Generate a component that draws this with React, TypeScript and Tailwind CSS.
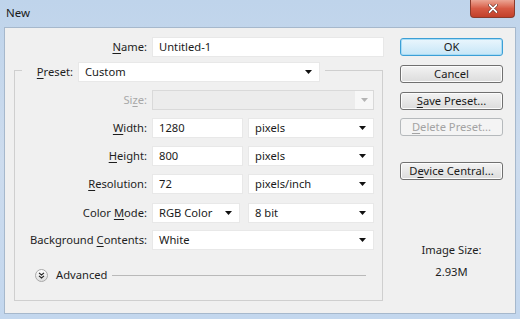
import React from 'react';

const font = { fontFamily: '"Noto Sans", "Open Sans", sans-serif' };

function Arrow({ disabled = false }: { disabled?: boolean }) {
  return (
    <svg width="7" height="4" viewBox="0 0 7 4" className="shrink-0">
      <path d="M0 0 H7 L3.5 4 Z" fill={disabled ? '#b4b4b4' : '#111'} />
    </svg>
  );
}

function U({ children }: { children: React.ReactNode }) {
  return <span className="underline underline-offset-2 decoration-1">{children}</span>;
}

function Input({ value, w }: { value: string; w: string }) {
  return (
    <div className={`${w} h-[20px] bg-white border border-[#e8e8e8] flex items-center pl-[6px] text-[#1a1a1a]`}>
      {value}
    </div>
  );
}

function Select({ value, w }: { value: string; w: string }) {
  return (
    <div className={`${w} h-[20px] bg-white border border-[#e8e8e8] flex items-center pl-[6px] pr-[7px] text-[#1a1a1a]`}>
      <span className="flex-1">{value}</span>
      <Arrow />
    </div>
  );
}

function Label({ children, gray = false }: { children: React.ReactNode; gray?: boolean }) {
  return (
    <div className={`w-[132px] text-right mr-[5px] ${gray ? 'text-[#a8a8a8]' : 'text-[#1e1e1e]'}`}>
      {children}
    </div>
  );
}

function Button({
  children,
  primary = false,
  disabled = false,
  className = '',
}: {
  children: React.ReactNode;
  primary?: boolean;
  disabled?: boolean;
  className?: string;
}) {
  const look = primary
    ? 'border-[#3c9fd6] bg-gradient-to-b from-[#eaf6fd] to-[#c6e6f7] text-[#1a1a1a] shadow-[inset_0_0_0_1px_#a8dcf5]'
    : disabled
      ? 'border-[#b5b9bc] bg-[#f4f4f4] text-[#a3a3a3]'
      : 'border-[#707070] bg-gradient-to-b from-[#f3f3f3] to-[#dcdcdc] text-[#1a1a1a] shadow-[inset_0_0_0_1px_#fcfcfc]';
  return (
    <div className={`w-[103px] h-[18px] rounded-[3px] border flex items-center justify-center ${look} ${className}`}>
      {children}
    </div>
  );
}

export default function App() {
  return (
    <div
      className="w-[520px] h-[319px] overflow-hidden bg-gradient-to-b from-[#bfd4eb] via-[#cddcee] to-[#c3d7ee] text-[11.2px] leading-none"
      style={font}
    >
      <div className="h-[27px] flex items-start">
        <span className="pl-[6px] pt-[7px] text-[11.5px] text-[#1a1a1a]">New</span>
        <div className="ml-auto mr-[5px] w-[45px] h-[18px] rounded-b-[4px] border border-t-0 border-[#8b3b2c] bg-gradient-to-b from-[#eba594] via-[#d65a44] to-[#c2402a] flex items-center justify-center">
          <svg width="10" height="9" viewBox="0 0 10 9">
            <path d="M1.5 1 L8.5 8 M8.5 1 L1.5 8" stroke="#5a1a10" strokeWidth="3" strokeLinecap="round" />
            <path d="M1.5 1 L8.5 8 M8.5 1 L1.5 8" stroke="#fff" strokeWidth="1.8" strokeLinecap="round" />
          </svg>
        </div>
      </div>

      <div className="mx-[4px] h-[287px] bg-[#f0f0f0] border border-[#a6b8cc] flex">
        {/* left column */}
        <div className="w-[380px] pt-[9px]">
          <div className="flex items-center h-[20px]">
            <div className="w-[142px] text-right mr-[5px] text-[#1e1e1e]">
              <U>N</U>ame:
            </div>
            <Input value="Untitled-1" w="w-[232px]" />
          </div>

          <div className="mt-[13px] ml-[9px] w-[369px] h-[231px] border border-[#cfcfcf]">
            <div className="-mt-[9px] ml-[7px] w-[303px] h-[20px] bg-[#f0f0f0] flex items-center">
              <div className="w-[51px] text-right mr-[5px] text-[#1e1e1e]">
                <U>P</U>reset:
              </div>
              <Select value="Custom" w="w-[242px]" />
            </div>

            <div className="mt-[8px] flex items-center h-[20px]">
              <Label gray>
                Si<U>z</U>e:
              </Label>
              <div className="w-[222px] h-[20px] border border-[#d9d9d9] bg-[#ececec] flex items-center justify-end">
                <div className="w-[18px] h-full bg-[#f7f7f7] flex items-center justify-center">
                  <Arrow disabled />
                </div>
              </div>
            </div>

            <div className="mt-[8px] flex items-center h-[20px]">
              <Label>
                <U>W</U>idth:
              </Label>
              <Input value="1280" w="w-[91px]" />
              <div className="ml-[5px]">
                <Select value="pixels" w="w-[126px]" />
              </div>
            </div>

            <div className="mt-[8px] flex items-center h-[20px]">
              <Label>
                <U>H</U>eight:
              </Label>
              <Input value="800" w="w-[91px]" />
              <div className="ml-[5px]">
                <Select value="pixels" w="w-[126px]" />
              </div>
            </div>

            <div className="mt-[8px] flex items-center h-[20px]">
              <Label>
                <U>R</U>esolution:
              </Label>
              <Input value="72" w="w-[91px]" />
              <div className="ml-[5px]">
                <Select value="pixels/inch" w="w-[126px]" />
              </div>
            </div>

            <div className="mt-[9px] flex items-center h-[20px]">
              <Label>
                Color <U>M</U>ode:
              </Label>
              <Select value="RGB Color" w="w-[88px]" />
              <div className="ml-[8px]">
                <Select value="8 bit" w="w-[126px]" />
              </div>
            </div>

            <div className="mt-[7px] flex items-center h-[20px]">
              <Label>
                Background <U>C</U>ontents:
              </Label>
              <Select value="White" w="w-[222px]" />
            </div>

            <div className="mt-[18px] h-[14px] flex items-center">
              <div className="ml-[20px] w-[13px] h-[13px] rounded-full border border-[#a9a9a9] bg-gradient-to-b from-white to-[#dedede] flex items-center justify-center">
                <svg width="7" height="7" viewBox="0 0 7 7">
                  <path d="M1 0.8 L3.5 3 L6 0.8 M1 3.8 L3.5 6 L6 3.8" stroke="#222" strokeWidth="1.1" fill="none" />
                </svg>
              </div>
              <span className="ml-[8px] text-[#1e1e1e]">Advanced</span>
              <div className="flex-1 ml-[5px] mr-[16px] h-px bg-[#b9b9b9]" />
            </div>
          </div>
        </div>

        {/* right column */}
        <div className="ml-[15px] pt-[10px] flex flex-col items-center">
          <Button primary>OK</Button>
          <Button className="mt-[9px]">Cancel</Button>
          <Button className="mt-[9px]">
            <span>
              <U>S</U>ave Preset...
            </span>
          </Button>
          <Button disabled className="mt-[8px]">
            <span>
              <U>D</U>elete Preset...
            </span>
          </Button>
          <Button className="mt-[26px]">
            <span>
              D<U>e</U>vice Central...
            </span>
          </Button>
          <div className="mt-[64px] text-[#1e1e1e]">Image Size:</div>
          <div className="mt-[11px] text-[#1e1e1e]">2.93M</div>
        </div>
      </div>
    </div>
  );
}
